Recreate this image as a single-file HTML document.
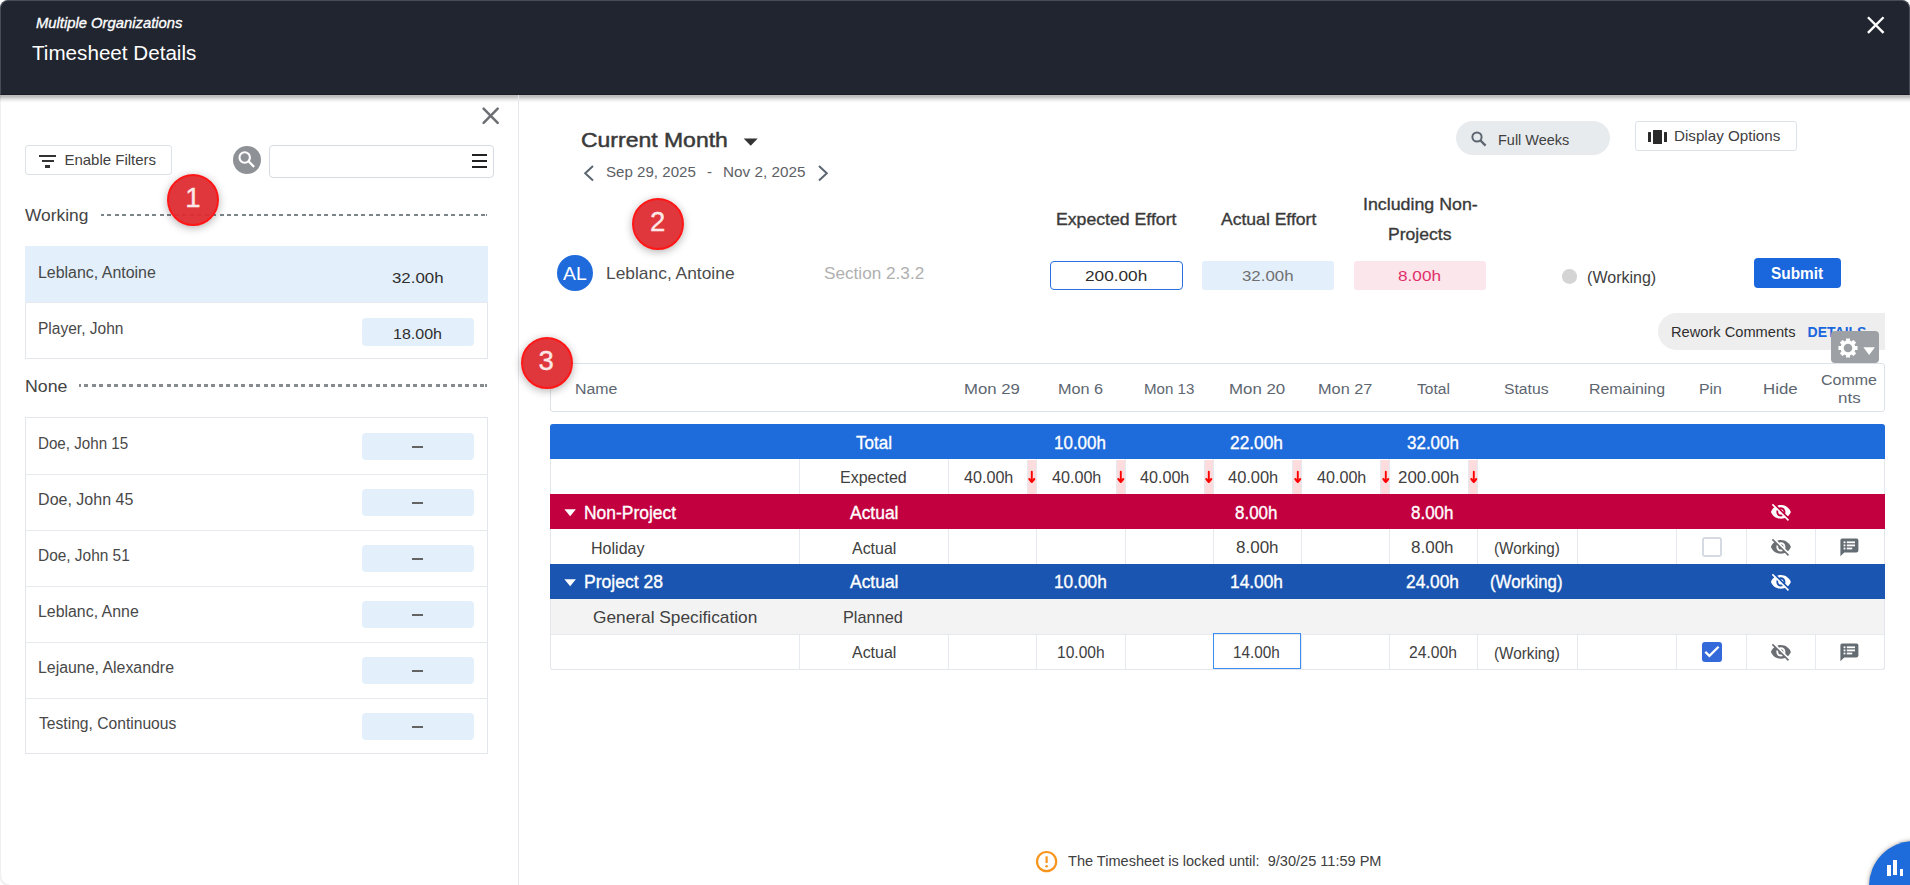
<!DOCTYPE html>
<html><head><meta charset="utf-8"><style>
html,body{margin:0;padding:0;}
body{width:1910px;height:885px;overflow:hidden;position:relative;background:#fff;font-family:'Liberation Sans',sans-serif;}
.t{position:absolute;line-height:0;white-space:pre;transform-origin:0 0;}
.a{position:absolute;box-sizing:border-box;}
svg.a{overflow:visible;}

</style></head><body>
<div class="a" style="left:0px;top:0px;width:1910px;height:885px;border-left:1px solid #f0f0f0;border-radius:8px 8px 0 10px;box-shadow:0 1px 2px rgba(0,0,0,.12);background:#fff"></div>
<div class="a" style="left:0px;top:0px;width:1910px;height:95px;background:#21252f;border-radius:8px 8px 0 0;border:1px solid #474c57;border-bottom:1px solid #181c27"></div>
<div class="a" style="left:0px;top:95px;width:1910px;height:8px;background:linear-gradient(rgba(0,0,0,.27),rgba(0,0,0,.25) 22%,rgba(0,0,0,.12) 50%,rgba(0,0,0,.03) 80%,rgba(0,0,0,0))"></div>
<svg class="a" style="left:1864px;top:14px;" width="24" height="24" viewBox="0 0 24 24"><path d="M3.95 3.25 L19.55 18.85 M19.55 3.25 L3.95 18.85" stroke="#fff" stroke-width="2.4"/></svg>
<div class="a" style="left:518px;top:95px;width:1px;height:790px;background:#e4e7eb"></div>
<svg class="a" style="left:480px;top:105px;" width="22" height="22" viewBox="0 0 22 22"><path d="M3.6 3.7 L17.7 17.8 M17.7 3.7 L3.6 17.8" stroke="#6b6f73" stroke-width="2.5" stroke-linecap="round"/></svg>
<div class="a" style="left:25px;top:145px;width:146.5px;height:30px;border:1px solid #dde2e8;border-radius:3px"></div>
<div class="a" style="left:38.8px;top:155.4px;width:17.7px;height:2.1px;background:#333"></div>
<div class="a" style="left:41.5px;top:160.2px;width:12.3px;height:2.0px;background:#333"></div>
<div class="a" style="left:45.2px;top:165.4px;width:4.9px;height:2.3px;background:#333"></div>
<div class="a" style="left:232.8px;top:145.9px;width:28px;height:28px;border-radius:50%;background:#8e9196"></div>
<svg class="a" style="left:232.8px;top:145.9px;" width="28" height="28" viewBox="0 0 28 28"><circle cx="11.7" cy="11.5" r="5.2" fill="none" stroke="#fff" stroke-width="2.1"/><path d="M15.5 15.3 L21.1 20.9" stroke="#fff" stroke-width="2.3"/></svg>
<div class="a" style="left:269.3px;top:145.2px;width:224.5px;height:32.5px;border:1px solid #d5dbe3;border-radius:4px"></div>
<div class="a" style="left:472.1px;top:154.05px;width:14.6px;height:1.9px;background:#222"></div>
<div class="a" style="left:472.1px;top:159.95000000000002px;width:14.6px;height:1.9px;background:#222"></div>
<div class="a" style="left:472.1px;top:165.95000000000002px;width:14.6px;height:1.9px;background:#222"></div>
<div class="a" style="left:101px;top:214px;width:386px;height:1.9px;background:repeating-linear-gradient(90deg,#7d8487 0 4px,transparent 4px 7.47px);background-position:-1px 0"></div>
<div class="a" style="left:79px;top:384.1px;width:408px;height:2.8px;background:repeating-linear-gradient(90deg,#868c8d 0 4px,transparent 4px 7.47px);background-position:-2px 0"></div>
<div class="a" style="left:25px;top:246px;width:463px;height:112.5px;border:1px solid #e3e6ea"></div>
<div class="a" style="left:25px;top:246px;width:463px;height:56.5px;background:#e3f0fb"></div>
<div class="a" style="left:25px;top:302px;width:463px;height:1px;background:#e6e9ed"></div>
<div class="a" style="left:362px;top:318.2px;width:112px;height:27.6px;background:#e3f0fb;border-radius:4px"></div>
<div class="a" style="left:25px;top:417px;width:463px;height:336.5px;border:1px solid #e3e6ea"></div>
<div class="a" style="left:362.2px;top:433px;width:111.7px;height:26.8px;background:#e3f0fb;border-radius:4px"></div>
<div class="a" style="left:412px;top:446.3px;width:11px;height:2.1px;background:#636363"></div>
<div class="a" style="left:25px;top:473.5px;width:463px;height:1px;background:#e6e9ed"></div>
<div class="a" style="left:362.2px;top:489px;width:111.7px;height:26.8px;background:#e3f0fb;border-radius:4px"></div>
<div class="a" style="left:412px;top:502.3px;width:11px;height:2.1px;background:#636363"></div>
<div class="a" style="left:25px;top:529.5px;width:463px;height:1px;background:#e6e9ed"></div>
<div class="a" style="left:362.2px;top:545px;width:111.7px;height:26.8px;background:#e3f0fb;border-radius:4px"></div>
<div class="a" style="left:412px;top:558.3px;width:11px;height:2.1px;background:#636363"></div>
<div class="a" style="left:25px;top:585.5px;width:463px;height:1px;background:#e6e9ed"></div>
<div class="a" style="left:362.2px;top:601px;width:111.7px;height:26.8px;background:#e3f0fb;border-radius:4px"></div>
<div class="a" style="left:412px;top:614.3px;width:11px;height:2.1px;background:#636363"></div>
<div class="a" style="left:25px;top:641.5px;width:463px;height:1px;background:#e6e9ed"></div>
<div class="a" style="left:362.2px;top:657px;width:111.7px;height:26.8px;background:#e3f0fb;border-radius:4px"></div>
<div class="a" style="left:412px;top:670.3px;width:11px;height:2.1px;background:#636363"></div>
<div class="a" style="left:25px;top:697.5px;width:463px;height:1px;background:#e6e9ed"></div>
<div class="a" style="left:362.2px;top:713px;width:111.7px;height:26.8px;background:#e3f0fb;border-radius:4px"></div>
<div class="a" style="left:412px;top:726.3px;width:11px;height:2.1px;background:#636363"></div>
<svg class="a" style="left:743px;top:138px;" width="16" height="9" viewBox="0 0 16 9"><path d="M0.7 0.5 L14.7 0.5 L7.7 7.8 Z" fill="#333"/></svg>
<svg class="a" style="left:582px;top:164px;" width="14" height="19" viewBox="0 0 14 19"><path d="M11 2 L3.2 9.3 L11 16.6" fill="none" stroke="#5b6670" stroke-width="2"/></svg>
<svg class="a" style="left:816px;top:164px;" width="14" height="19" viewBox="0 0 14 19"><path d="M3 2 L10.8 9.3 L3 16.6" fill="none" stroke="#5b6670" stroke-width="2"/></svg>
<div class="a" style="left:556.9px;top:255px;width:36px;height:36px;border-radius:50%;background:#1f6bdc"></div>
<div class="a" style="left:1050px;top:260.8px;width:132.8px;height:28.9px;border:1.6px solid #2a6fe0;border-radius:4px"></div>
<div class="a" style="left:1202.2px;top:261.3px;width:131.4px;height:28.4px;background:#e3effa;border-radius:3px"></div>
<div class="a" style="left:1354.3px;top:261.3px;width:131.4px;height:28.4px;background:#fbe6ec;border-radius:3px"></div>
<div class="a" style="left:1562.2px;top:269.2px;width:14.6px;height:14.6px;border-radius:50%;background:#d4d4d4"></div>
<div class="a" style="left:1754.2px;top:257.8px;width:86.7px;height:29.9px;background:#1a66dc;border-radius:4px"></div>
<div class="a" style="left:1456px;top:121px;width:154px;height:34px;background:#e8ebee;border-radius:17px"></div>
<svg class="a" style="left:1470px;top:130px;" width="18" height="18" viewBox="0 0 18 18"><circle cx="7" cy="7" r="4.6" fill="none" stroke="#5d6670" stroke-width="2"/><path d="M10.4 10.4 L15.6 15.6" stroke="#5d6670" stroke-width="2.2"/></svg>
<div class="a" style="left:1635.3px;top:121.2px;width:161.5px;height:29.5px;border:1px solid #dde2e8;border-radius:3px"></div>
<div class="a" style="left:1648px;top:132px;width:3.1px;height:10.3px;background:#2a2a2a;border-radius:.5px"></div>
<div class="a" style="left:1652.9px;top:130px;width:9.3px;height:14px;background:#2a2a2a;border-radius:.5px"></div>
<div class="a" style="left:1663.9px;top:132px;width:3.1px;height:10.3px;background:#2a2a2a;border-radius:.5px"></div>
<div class="a" style="left:1658px;top:313px;width:227px;height:37px;background:#eeeeee;border-radius:18.5px 0 0 18.5px"></div>
<div class="a" style="left:550px;top:363px;width:1335px;height:48.5px;border:1px solid #dde2e8;border-radius:3px"></div>
<div class="a" style="left:550px;top:424px;width:1335px;height:245.5px;border:1px solid #e3e6ea;border-radius:3px;border-top:none"></div>
<div class="a" style="left:550px;top:424px;width:1335px;height:35px;background:#1e6bdb;border-radius:3px 3px 0 0"></div>
<div class="a" style="left:550px;top:494px;width:1335px;height:35px;background:#c3003f"></div>
<div class="a" style="left:550px;top:564px;width:1335px;height:35px;background:#1a56b1"></div>
<div class="a" style="left:550px;top:599px;width:1335px;height:35.5px;background:#f3f3f3;border-left:1px solid #e3e6ea;border-right:1px solid #e3e6ea;border-bottom:1px solid #e6e9ed"></div>
<div class="a" style="left:799.0px;top:459px;width:1px;height:35px;background:#e6e9ed"></div>
<div class="a" style="left:947.8px;top:459px;width:1px;height:35px;background:#e6e9ed"></div>
<div class="a" style="left:1035.9px;top:459px;width:1px;height:35px;background:#e6e9ed"></div>
<div class="a" style="left:1124.9px;top:459px;width:1px;height:35px;background:#e6e9ed"></div>
<div class="a" style="left:1212.9px;top:459px;width:1px;height:35px;background:#e6e9ed"></div>
<div class="a" style="left:1301.0px;top:459px;width:1px;height:35px;background:#e6e9ed"></div>
<div class="a" style="left:1389.0px;top:459px;width:1px;height:35px;background:#e6e9ed"></div>
<div class="a" style="left:1477.0px;top:459px;width:1px;height:35px;background:#e6e9ed"></div>
<div class="a" style="left:799.0px;top:529px;width:1px;height:35px;background:#e6e9ed"></div>
<div class="a" style="left:947.8px;top:529px;width:1px;height:35px;background:#e6e9ed"></div>
<div class="a" style="left:1035.9px;top:529px;width:1px;height:35px;background:#e6e9ed"></div>
<div class="a" style="left:1124.9px;top:529px;width:1px;height:35px;background:#e6e9ed"></div>
<div class="a" style="left:1212.9px;top:529px;width:1px;height:35px;background:#e6e9ed"></div>
<div class="a" style="left:1301.0px;top:529px;width:1px;height:35px;background:#e6e9ed"></div>
<div class="a" style="left:1389.0px;top:529px;width:1px;height:35px;background:#e6e9ed"></div>
<div class="a" style="left:1477.0px;top:529px;width:1px;height:35px;background:#e6e9ed"></div>
<div class="a" style="left:1576.9px;top:529px;width:1px;height:35px;background:#e6e9ed"></div>
<div class="a" style="left:1676.1px;top:529px;width:1px;height:35px;background:#e6e9ed"></div>
<div class="a" style="left:1745.9px;top:529px;width:1px;height:35px;background:#e6e9ed"></div>
<div class="a" style="left:1815.0px;top:529px;width:1px;height:35px;background:#e6e9ed"></div>
<div class="a" style="left:799.0px;top:634.5px;width:1px;height:35px;background:#e6e9ed"></div>
<div class="a" style="left:947.8px;top:634.5px;width:1px;height:35px;background:#e6e9ed"></div>
<div class="a" style="left:1035.9px;top:634.5px;width:1px;height:35px;background:#e6e9ed"></div>
<div class="a" style="left:1124.9px;top:634.5px;width:1px;height:35px;background:#e6e9ed"></div>
<div class="a" style="left:1212.9px;top:634.5px;width:1px;height:35px;background:#e6e9ed"></div>
<div class="a" style="left:1301.0px;top:634.5px;width:1px;height:35px;background:#e6e9ed"></div>
<div class="a" style="left:1389.0px;top:634.5px;width:1px;height:35px;background:#e6e9ed"></div>
<div class="a" style="left:1477.0px;top:634.5px;width:1px;height:35px;background:#e6e9ed"></div>
<div class="a" style="left:1576.9px;top:634.5px;width:1px;height:35px;background:#e6e9ed"></div>
<div class="a" style="left:1676.1px;top:634.5px;width:1px;height:35px;background:#e6e9ed"></div>
<div class="a" style="left:1745.9px;top:634.5px;width:1px;height:35px;background:#e6e9ed"></div>
<div class="a" style="left:1815.0px;top:634.5px;width:1px;height:35px;background:#e6e9ed"></div>
<div class="a" style="left:1027.0px;top:460px;width:8.9px;height:33.6px;background:#fddcdd;border-left:1px solid #e6eaee"></div>
<svg class="a" style="left:1026.4px;top:470px;" width="12" height="14" viewBox="0 0 12 14"><path d="M5.8 1.8 V11" stroke="#f00" stroke-width="1.9" stroke-linecap="round"/><path d="M3.3 9.0 L5.8 12.0 L8.3 9.0" fill="none" stroke="#f00" stroke-width="2.0" stroke-linecap="round" stroke-linejoin="round"/></svg>
<div class="a" style="left:1116.0px;top:460px;width:8.9px;height:33.6px;background:#fddcdd;border-left:1px solid #e6eaee"></div>
<svg class="a" style="left:1115.4px;top:470px;" width="12" height="14" viewBox="0 0 12 14"><path d="M5.8 1.8 V11" stroke="#f00" stroke-width="1.9" stroke-linecap="round"/><path d="M3.3 9.0 L5.8 12.0 L8.3 9.0" fill="none" stroke="#f00" stroke-width="2.0" stroke-linecap="round" stroke-linejoin="round"/></svg>
<div class="a" style="left:1204.0px;top:460px;width:8.9px;height:33.6px;background:#fddcdd;border-left:1px solid #e6eaee"></div>
<svg class="a" style="left:1203.4px;top:470px;" width="12" height="14" viewBox="0 0 12 14"><path d="M5.8 1.8 V11" stroke="#f00" stroke-width="1.9" stroke-linecap="round"/><path d="M3.3 9.0 L5.8 12.0 L8.3 9.0" fill="none" stroke="#f00" stroke-width="2.0" stroke-linecap="round" stroke-linejoin="round"/></svg>
<div class="a" style="left:1292.1px;top:460px;width:8.9px;height:33.6px;background:#fddcdd;border-left:1px solid #e6eaee"></div>
<svg class="a" style="left:1291.5px;top:470px;" width="12" height="14" viewBox="0 0 12 14"><path d="M5.8 1.8 V11" stroke="#f00" stroke-width="1.9" stroke-linecap="round"/><path d="M3.3 9.0 L5.8 12.0 L8.3 9.0" fill="none" stroke="#f00" stroke-width="2.0" stroke-linecap="round" stroke-linejoin="round"/></svg>
<div class="a" style="left:1380.1px;top:460px;width:8.9px;height:33.6px;background:#fddcdd;border-left:1px solid #e6eaee"></div>
<svg class="a" style="left:1379.5px;top:470px;" width="12" height="14" viewBox="0 0 12 14"><path d="M5.8 1.8 V11" stroke="#f00" stroke-width="1.9" stroke-linecap="round"/><path d="M3.3 9.0 L5.8 12.0 L8.3 9.0" fill="none" stroke="#f00" stroke-width="2.0" stroke-linecap="round" stroke-linejoin="round"/></svg>
<div class="a" style="left:1468.1px;top:460px;width:8.9px;height:33.6px;background:#fddcdd;border-left:1px solid #e6eaee"></div>
<svg class="a" style="left:1467.5px;top:470px;" width="12" height="14" viewBox="0 0 12 14"><path d="M5.8 1.8 V11" stroke="#f00" stroke-width="1.9" stroke-linecap="round"/><path d="M3.3 9.0 L5.8 12.0 L8.3 9.0" fill="none" stroke="#f00" stroke-width="2.0" stroke-linecap="round" stroke-linejoin="round"/></svg>
<svg class="a" style="left:564px;top:508.8px;" width="12.5" height="8" viewBox="0 0 12.5 8"><path d="M0.4 0.2 L11.9 0.2 L6.15 7.3 Z" fill="#fff"/></svg>
<svg class="a" style="left:564px;top:578.8px;" width="12.5" height="8" viewBox="0 0 12.5 8"><path d="M0.4 0.2 L11.9 0.2 L6.15 7.3 Z" fill="#fff"/></svg>
<svg class="a" style="left:1770.1px;top:501.3px" width="21.8" height="21.8" viewBox="0 0 24 24"><path d="M12 7c2.76 0 5 2.24 5 5 0 .65-.13 1.26-.36 1.83l2.92 2.92c1.51-1.26 2.7-2.89 3.43-4.75-1.73-4.39-6-7.5-11-7.5-1.4 0-2.74.25-3.98.7l2.16 2.16C10.74 7.13 11.35 7 12 7zM2 4.27l2.28 2.28.46.46C3.08 8.3 1.78 10.02 1 12c1.730 4.39 6 7.5 11 7.5 1.55 0 3.03-.3 4.38-.84l.42.42L19.73 22 21 20.73 3.27 3 2 4.27zM7.53 9.8l1.55 1.55c-.05.21-.08.43-.08.65 0 1.66 1.34 3 3 3 .22 0 .44-.03.65-.08l1.55 1.55c-.67.33-1.41.53-2.2.53-2.76 0-5-2.24-5-5 0-.79.2-1.53.53-2.2zm4.31-.78l3.15 3.15.02-.16c0-1.66-1.34-3-3-3l-.17.01z" fill="#fff"/></svg>
<svg class="a" style="left:1770.1px;top:536.2px" width="21.8" height="21.8" viewBox="0 0 24 24"><path d="M12 7c2.76 0 5 2.24 5 5 0 .65-.13 1.26-.36 1.83l2.92 2.92c1.51-1.26 2.7-2.89 3.43-4.75-1.73-4.39-6-7.5-11-7.5-1.4 0-2.74.25-3.98.7l2.16 2.16C10.74 7.13 11.35 7 12 7zM2 4.27l2.28 2.28.46.46C3.08 8.3 1.78 10.02 1 12c1.730 4.39 6 7.5 11 7.5 1.55 0 3.03-.3 4.38-.84l.42.42L19.73 22 21 20.73 3.27 3 2 4.27zM7.53 9.8l1.55 1.55c-.05.21-.08.43-.08.65 0 1.66 1.34 3 3 3 .22 0 .44-.03.65-.08l1.55 1.55c-.67.33-1.41.53-2.2.53-2.76 0-5-2.24-5-5 0-.79.2-1.53.53-2.2zm4.31-.78l3.15 3.15.02-.16c0-1.66-1.34-3-3-3l-.17.01z" fill="#6b6f73"/></svg>
<svg class="a" style="left:1770.1px;top:571.2px" width="21.8" height="21.8" viewBox="0 0 24 24"><path d="M12 7c2.76 0 5 2.24 5 5 0 .65-.13 1.26-.36 1.83l2.92 2.92c1.51-1.26 2.7-2.89 3.43-4.75-1.73-4.39-6-7.5-11-7.5-1.4 0-2.74.25-3.98.7l2.16 2.16C10.74 7.13 11.35 7 12 7zM2 4.27l2.28 2.28.46.46C3.08 8.3 1.78 10.02 1 12c1.730 4.39 6 7.5 11 7.5 1.55 0 3.03-.3 4.38-.84l.42.42L19.73 22 21 20.73 3.27 3 2 4.27zM7.53 9.8l1.55 1.55c-.05.21-.08.43-.08.65 0 1.66 1.34 3 3 3 .22 0 .44-.03.65-.08l1.55 1.55c-.67.33-1.41.53-2.2.53-2.76 0-5-2.24-5-5 0-.79.2-1.53.53-2.2zm4.31-.78l3.15 3.15.02-.16c0-1.66-1.34-3-3-3l-.17.01z" fill="#fff"/></svg>
<svg class="a" style="left:1770.1px;top:641.2px" width="21.8" height="21.8" viewBox="0 0 24 24"><path d="M12 7c2.76 0 5 2.24 5 5 0 .65-.13 1.26-.36 1.83l2.92 2.92c1.51-1.26 2.7-2.89 3.43-4.75-1.73-4.39-6-7.5-11-7.5-1.4 0-2.74.25-3.98.7l2.16 2.16C10.74 7.13 11.35 7 12 7zM2 4.27l2.28 2.28.46.46C3.08 8.3 1.78 10.02 1 12c1.730 4.39 6 7.5 11 7.5 1.55 0 3.03-.3 4.38-.84l.42.42L19.73 22 21 20.73 3.27 3 2 4.27zM7.53 9.8l1.55 1.55c-.05.21-.08.43-.08.65 0 1.66 1.34 3 3 3 .22 0 .44-.03.65-.08l1.55 1.55c-.67.33-1.41.53-2.2.53-2.76 0-5-2.24-5-5 0-.79.2-1.53.53-2.2zm4.31-.78l3.15 3.15.02-.16c0-1.66-1.34-3-3-3l-.17.01z" fill="#6b6f73"/></svg>
<div class="a" style="left:1702.3px;top:537.1px;width:19.4px;height:19.6px;border:2px solid #d5dae3;border-radius:3px"></div>
<div class="a" style="left:1702.3px;top:642.1px;width:19.4px;height:19.6px;background:#3369d8;border-radius:3px"></div>
<svg class="a" style="left:1702.3px;top:642.1px;" width="20" height="20" viewBox="0 0 20 20"><path d="M3.3 9.9 L7.4 13.9 L16.6 4.8" fill="none" stroke="#fff" stroke-width="2.2"/></svg>
<svg class="a" style="left:1840.1px;top:537.6px;" width="19" height="19" viewBox="0 0 19 19"><path d="M2.2 0.4 H16.6 A1.8 1.8 0 0 1 18.4 2.2 V12.6 A1.8 1.8 0 0 1 16.6 14.4 H4.2 L0.4 18.2 V2.2 A1.8 1.8 0 0 1 2.2 0.4z" fill="#646c73"/><rect x="3.6" y="3.4" width="1.8" height="1.8" fill="#fff"/><rect x="6.8" y="3.4" width="8.2" height="1.8" fill="#fff"/><rect x="3.6" y="6.5" width="1.8" height="1.8" fill="#fff"/><rect x="6.8" y="6.5" width="8.2" height="1.8" fill="#fff"/><rect x="3.6" y="9.6" width="1.8" height="1.8" fill="#fff"/><rect x="6.8" y="9.6" width="5.4" height="1.8" fill="#fff"/></svg>
<svg class="a" style="left:1840.1px;top:642.6px;" width="19" height="19" viewBox="0 0 19 19"><path d="M2.2 0.4 H16.6 A1.8 1.8 0 0 1 18.4 2.2 V12.6 A1.8 1.8 0 0 1 16.6 14.4 H4.2 L0.4 18.2 V2.2 A1.8 1.8 0 0 1 2.2 0.4z" fill="#646c73"/><rect x="3.6" y="3.4" width="1.8" height="1.8" fill="#fff"/><rect x="6.8" y="3.4" width="8.2" height="1.8" fill="#fff"/><rect x="3.6" y="6.5" width="1.8" height="1.8" fill="#fff"/><rect x="6.8" y="6.5" width="8.2" height="1.8" fill="#fff"/><rect x="3.6" y="9.6" width="1.8" height="1.8" fill="#fff"/><rect x="6.8" y="9.6" width="5.4" height="1.8" fill="#fff"/></svg>
<div class="a" style="left:1212.7px;top:633.1px;width:88.3px;height:36px;border:1px solid #3d8ef0"></div>
<svg class="a" style="left:1035px;top:850px;" width="23" height="23" viewBox="0 0 23 23"><circle cx="11.6" cy="11.6" r="9.6" fill="none" stroke="#f7941d" stroke-width="2.2"/><path d="M11.6 6.3 V13" stroke="#f7941d" stroke-width="2.2"/><circle cx="11.6" cy="16.2" r="1.3" fill="#f7941d"/></svg>
<div class="a" style="left:167.3px;top:173.6px;width:52px;height:52px;border-radius:50%;background:rgba(221,44,48,.95);border:2px solid #ff1717;box-shadow:0 2px 8px rgba(0,0,0,.3)"></div>
<div class="a" style="left:631.5px;top:197.5px;width:52px;height:52px;border-radius:50%;background:rgba(221,44,48,.95);border:2px solid #ff1717;box-shadow:0 2px 8px rgba(0,0,0,.3)"></div>
<div class="a" style="left:520.6px;top:336.6px;width:52px;height:52px;border-radius:50%;background:rgba(221,44,48,.95);border:2px solid #ff1717;box-shadow:0 2px 8px rgba(0,0,0,.3)"></div>
<div class="t" style="left:35.70px;top:23.30px;font-size:15px;color:#fff;font-style:italic;-webkit-text-stroke:0.35px currentColor;transform:scaleX(0.9866)">Multiple Organizations</div>
<div class="t" style="left:32.00px;top:52.70px;font-size:19.5px;color:#fff;transform:scaleX(1.0581)">Timesheet Details</div>
<div class="t" style="left:64.40px;top:160.00px;font-size:15px;color:#404040">Enable Filters</div>
<div class="t" style="left:25.20px;top:214.80px;font-size:16.5px;color:#444;transform:scaleX(1.0508)">Working</div>
<div class="t" style="left:37.80px;top:273.30px;font-size:16px;color:#484848;transform:scaleX(0.9957)">Leblanc, Antoine</div>
<div class="t" style="left:37.83px;top:329.30px;font-size:16px;color:#484848;transform:scaleX(0.9698)">Player, John</div>
<div class="t" style="left:391.51px;top:277.90px;font-size:15.5px;color:#2e2e2e;transform:scaleX(1.0870)">32.00h</div>
<div class="t" style="left:392.57px;top:334.20px;font-size:15.5px;color:#2e2e2e;transform:scaleX(1.0326)">18.00h</div>
<div class="t" style="left:24.56px;top:387.10px;font-size:17px;color:#444;transform:scaleX(1.0436)">None</div>
<div class="t" style="left:38.15px;top:444.10px;font-size:16px;color:#484848;transform:scaleX(0.9468)">Doe, John 15</div>
<div class="t" style="left:38.10px;top:500.10px;font-size:16px;color:#484848">Doe, John 45</div>
<div class="t" style="left:38.14px;top:556.10px;font-size:16px;color:#484848;transform:scaleX(0.9638)">Doe, John 51</div>
<div class="t" style="left:38.11px;top:612.10px;font-size:16px;color:#484848;transform:scaleX(0.9930)">Leblanc, Anne</div>
<div class="t" style="left:38.11px;top:668.10px;font-size:16px;color:#484848;transform:scaleX(0.9926)">Lejaune, Alexandre</div>
<div class="t" style="left:39.10px;top:724.10px;font-size:16px;color:#484848;transform:scaleX(0.9771)">Testing, Continuous</div>
<div class="t" style="left:580.61px;top:140.00px;font-size:21px;color:#3a3a3a;-webkit-text-stroke:0.5px currentColor;transform:scaleX(1.0939)">Current Month</div>
<div class="t" style="left:605.69px;top:172.30px;font-size:15px;color:#5d6166;transform:scaleX(1.0068)">Sep 29, 2025</div>
<div class="t" style="left:707.00px;top:172.30px;font-size:15px;color:#5d6166">-</div>
<div class="t" style="left:722.98px;top:172.30px;font-size:15px;color:#5d6166;transform:scaleX(1.0203)">Nov 2, 2025</div>
<div class="t" style="left:563.35px;top:273.70px;font-size:18.5px;color:#fff;transform:scaleX(1.0455)">AL</div>
<div class="t" style="left:605.88px;top:273.90px;font-size:17px;color:#4c4c4c;transform:scaleX(1.0226)">Leblanc, Antoine</div>
<div class="t" style="left:824.29px;top:274.40px;font-size:17px;color:#b0b0b0;transform:scaleX(1.0102)">Section 2.3.2</div>
<div class="t" style="left:1055.96px;top:220.10px;font-size:17px;color:#3a3a3a;-webkit-text-stroke:0.35px currentColor;transform:scaleX(1.0391)">Expected Effort</div>
<div class="t" style="left:1220.50px;top:219.80px;font-size:17px;color:#3a3a3a;-webkit-text-stroke:0.35px currentColor;transform:scaleX(1.0323)">Actual Effort</div>
<div class="t" style="left:1362.65px;top:205.20px;font-size:17px;color:#3a3a3a;-webkit-text-stroke:0.35px currentColor;transform:scaleX(1.0463)">Including Non-</div>
<div class="t" style="left:1388.27px;top:234.90px;font-size:17px;color:#3a3a3a;-webkit-text-stroke:0.35px currentColor;transform:scaleX(1.0333)">Projects</div>
<div class="t" style="left:1084.89px;top:275.90px;font-size:15.5px;color:#2e2e2e;transform:scaleX(1.1111)">200.00h</div>
<div class="t" style="left:1241.71px;top:276.00px;font-size:15.5px;color:#707070;transform:scaleX(1.0870)">32.00h</div>
<div class="t" style="left:1398.29px;top:276.00px;font-size:15.5px;color:#e0306a;transform:scaleX(1.1081)">8.00h</div>
<div class="t" style="left:1587.10px;top:278.30px;font-size:16px;color:#404040">(Working)</div>
<div class="t" style="left:1771.04px;top:274.20px;font-size:16px;color:#fff;font-weight:700;transform:scaleX(0.9623)">Submit</div>
<div class="t" style="left:1498.04px;top:139.50px;font-size:15px;color:#404040;transform:scaleX(0.9644)">Full Weeks</div>
<div class="t" style="left:1674.37px;top:136.00px;font-size:14.8px;color:#404040;transform:scaleX(1.0255)">Display Options</div>
<div class="t" style="left:1670.55px;top:331.80px;font-size:14px;color:#2e2e2e;transform:scaleX(1.0458)">Rework Comments</div>
<div class="t" style="left:1807.60px;top:331.80px;font-size:14px;color:#1a66dc;font-weight:700">DETAILS</div>
<div class="t" style="left:574.77px;top:389.00px;font-size:15.5px;color:#5d6670;transform:scaleX(1.0250)">Name</div>
<div class="t" style="left:964.22px;top:388.80px;font-size:15.5px;color:#5d6670;transform:scaleX(1.0800)">Mon 29</div>
<div class="t" style="left:1057.55px;top:388.80px;font-size:15.5px;color:#5d6670;transform:scaleX(1.0476)">Mon 6</div>
<div class="t" style="left:1143.58px;top:388.80px;font-size:15.5px;color:#5d6670;transform:scaleX(0.9740)">Mon 13</div>
<div class="t" style="left:1228.61px;top:388.80px;font-size:15.5px;color:#5d6670;transform:scaleX(1.0880)">Mon 20</div>
<div class="t" style="left:1317.95px;top:388.80px;font-size:15.5px;color:#5d6670;transform:scaleX(1.0520)">Mon 27</div>
<div class="t" style="left:1417.10px;top:388.80px;font-size:15.5px;color:#5d6670;transform:scaleX(1.0063)">Total</div>
<div class="t" style="left:1503.89px;top:388.80px;font-size:15.5px;color:#5d6670;transform:scaleX(1.0140)">Status</div>
<div class="t" style="left:1588.52px;top:388.80px;font-size:15.5px;color:#5d6670;transform:scaleX(1.0264)">Remaining</div>
<div class="t" style="left:1699.23px;top:388.80px;font-size:15.5px;color:#5d6670;transform:scaleX(1.0238)">Pin</div>
<div class="t" style="left:1763.11px;top:388.80px;font-size:15.5px;color:#5d6670;transform:scaleX(1.0867)">Hide</div>
<div class="t" style="left:1821.32px;top:379.70px;font-size:15.5px;color:#5d6670;transform:scaleX(1.0321)">Comme</div>
<div class="t" style="left:1838.11px;top:397.80px;font-size:15.5px;color:#5d6670;transform:scaleX(1.0947)">nts</div>
<div class="t" style="left:856.20px;top:442.50px;font-size:18px;color:#fff;-webkit-text-stroke:0.35px currentColor;transform:scaleX(0.9459)">Total</div>
<div class="t" style="left:1054.16px;top:442.50px;font-size:18px;color:#fff;-webkit-text-stroke:0.35px currentColor;transform:scaleX(0.9434)">10.00h</div>
<div class="t" style="left:1230.04px;top:442.50px;font-size:18px;color:#fff;-webkit-text-stroke:0.35px currentColor;transform:scaleX(0.9623)">22.00h</div>
<div class="t" style="left:1406.56px;top:442.50px;font-size:18px;color:#fff;-webkit-text-stroke:0.35px currentColor;transform:scaleX(0.9434)">32.00h</div>
<div class="t" style="left:840.33px;top:476.80px;font-size:16.5px;color:#404040;transform:scaleX(0.9701)">Expected</div>
<div class="t" style="left:963.80px;top:478.00px;font-size:16px;color:#404040;transform:scaleX(1.0083)">40.00h</div>
<div class="t" style="left:1052.00px;top:478.00px;font-size:16px;color:#404040;transform:scaleX(1.0083)">40.00h</div>
<div class="t" style="left:1140.20px;top:478.00px;font-size:16px;color:#404040;transform:scaleX(1.0083)">40.00h</div>
<div class="t" style="left:1228.05px;top:478.00px;font-size:16px;color:#404040;transform:scaleX(1.0271)">40.00h</div>
<div class="t" style="left:1316.70px;top:478.00px;font-size:16px;color:#404040;transform:scaleX(1.0083)">40.00h</div>
<div class="t" style="left:1398.14px;top:478.00px;font-size:16px;color:#404040;transform:scaleX(1.0571)">200.00h</div>
<div class="t" style="left:584.23px;top:512.50px;font-size:18px;color:#fff;-webkit-text-stroke:0.35px currentColor;transform:scaleX(0.9681)">Non-Project</div>
<div class="t" style="left:849.75px;top:512.50px;font-size:18px;color:#fff;-webkit-text-stroke:0.35px currentColor;transform:scaleX(0.9694)">Actual</div>
<div class="t" style="left:1235.31px;top:512.50px;font-size:18px;color:#fff;-webkit-text-stroke:0.35px currentColor;transform:scaleX(0.9419)">8.00h</div>
<div class="t" style="left:1411.31px;top:512.50px;font-size:18px;color:#fff;-webkit-text-stroke:0.35px currentColor;transform:scaleX(0.9419)">8.00h</div>
<div class="t" style="left:590.53px;top:547.50px;font-size:16.5px;color:#404040;transform:scaleX(0.9722)">Holiday</div>
<div class="t" style="left:851.75px;top:547.50px;font-size:16.5px;color:#404040;transform:scaleX(0.9667)">Actual</div>
<div class="t" style="left:1236.04px;top:548.00px;font-size:16px;color:#404040;transform:scaleX(1.0632)">8.00h</div>
<div class="t" style="left:1411.24px;top:548.00px;font-size:16px;color:#404040;transform:scaleX(1.0632)">8.00h</div>
<div class="t" style="left:1493.54px;top:548.50px;font-size:16px;color:#404040;transform:scaleX(0.9552)">(Working)</div>
<div class="t" style="left:584.23px;top:582.40px;font-size:18px;color:#fff;-webkit-text-stroke:0.35px currentColor;transform:scaleX(0.9750)">Project 28</div>
<div class="t" style="left:849.75px;top:582.40px;font-size:18px;color:#fff;-webkit-text-stroke:0.35px currentColor;transform:scaleX(0.9694)">Actual</div>
<div class="t" style="left:1053.64px;top:582.20px;font-size:18px;color:#fff;-webkit-text-stroke:0.35px currentColor;transform:scaleX(0.9585)">10.00h</div>
<div class="t" style="left:1229.84px;top:582.20px;font-size:18px;color:#fff;-webkit-text-stroke:0.35px currentColor;transform:scaleX(0.9623)">14.00h</div>
<div class="t" style="left:1406.04px;top:582.20px;font-size:18px;color:#fff;-webkit-text-stroke:0.35px currentColor;transform:scaleX(0.9623)">24.00h</div>
<div class="t" style="left:1490.07px;top:582.40px;font-size:18px;color:#fff;-webkit-text-stroke:0.35px currentColor;transform:scaleX(0.9342)">(Working)</div>
<div class="t" style="left:592.88px;top:618.00px;font-size:17px;color:#404040;transform:scaleX(1.0169)">General Specification</div>
<div class="t" style="left:843.29px;top:618.00px;font-size:17px;color:#404040;transform:scaleX(0.9590)">Planned</div>
<div class="t" style="left:851.75px;top:652.00px;font-size:16.5px;color:#404040;transform:scaleX(0.9667)">Actual</div>
<div class="t" style="left:1056.58px;top:653.00px;font-size:16px;color:#404040;transform:scaleX(0.9723)">10.00h</div>
<div class="t" style="left:1233.24px;top:653.00px;font-size:16px;color:#404040;transform:scaleX(0.9574)">14.00h</div>
<div class="t" style="left:1408.52px;top:653.00px;font-size:16px;color:#404040;transform:scaleX(0.9787)">24.00h</div>
<div class="t" style="left:1493.54px;top:653.50px;font-size:16px;color:#404040;transform:scaleX(0.9552)">(Working)</div>
<div class="t" style="left:1067.80px;top:861.20px;font-size:14.5px;color:#404040;transform:scaleX(1.0032)">The Timesheet is locked until:  9/30/25 11:59 PM</div>
<div class="t" style="left:185.30px;top:197.50px;font-size:27.5px;color:#fde8e8;-webkit-text-stroke:0.35px currentColor">1</div>
<div class="t" style="left:650.00px;top:222.00px;font-size:27.5px;color:#fde8e8;-webkit-text-stroke:0.35px currentColor">2</div>
<div class="t" style="left:538.60px;top:361.00px;font-size:27.5px;color:#fde8e8;-webkit-text-stroke:0.35px currentColor">3</div>
<div class="a" style="left:1831.3px;top:330.9px;width:47.5px;height:31.7px;background:#9da0a5;border-radius:4px"></div>
<svg class="a" style="left:1836.35px;top:336.3px" width="24" height="24" viewBox="-12 -12 24 24"><g fill="#fff"><circle r="7.4"/><rect x="-2.05" y="-9.55" width="4.1" height="5" rx="0.5" transform="rotate(0)"/><rect x="-2.05" y="-9.55" width="4.1" height="5" rx="0.5" transform="rotate(45)"/><rect x="-2.05" y="-9.55" width="4.1" height="5" rx="0.5" transform="rotate(90)"/><rect x="-2.05" y="-9.55" width="4.1" height="5" rx="0.5" transform="rotate(135)"/><rect x="-2.05" y="-9.55" width="4.1" height="5" rx="0.5" transform="rotate(180)"/><rect x="-2.05" y="-9.55" width="4.1" height="5" rx="0.5" transform="rotate(225)"/><rect x="-2.05" y="-9.55" width="4.1" height="5" rx="0.5" transform="rotate(270)"/><rect x="-2.05" y="-9.55" width="4.1" height="5" rx="0.5" transform="rotate(315)"/></g><circle r="4.3" fill="#9da0a5"/></svg>
<svg class="a" style="left:1863px;top:346.8px;" width="13" height="9" viewBox="0 0 13 9"><path d="M0.4 0.3 L11.9 0.3 L6.15 7.9 Z" fill="#fff"/></svg>
<div class="a" style="left:1869px;top:841px;width:90px;height:90px;border-radius:50%;background:#1e6bdc;box-shadow:0 0 4px rgba(80,60,40,.5)"></div>
<div class="a" style="left:1887.2px;top:865px;width:3.6px;height:10.5px;background:#fff"></div>
<div class="a" style="left:1893.4px;top:860.4px;width:3.4px;height:15.1px;background:#fff"></div>
<div class="a" style="left:1899.8px;top:869px;width:2.9px;height:6.5px;background:#fff"></div>
</body></html>
